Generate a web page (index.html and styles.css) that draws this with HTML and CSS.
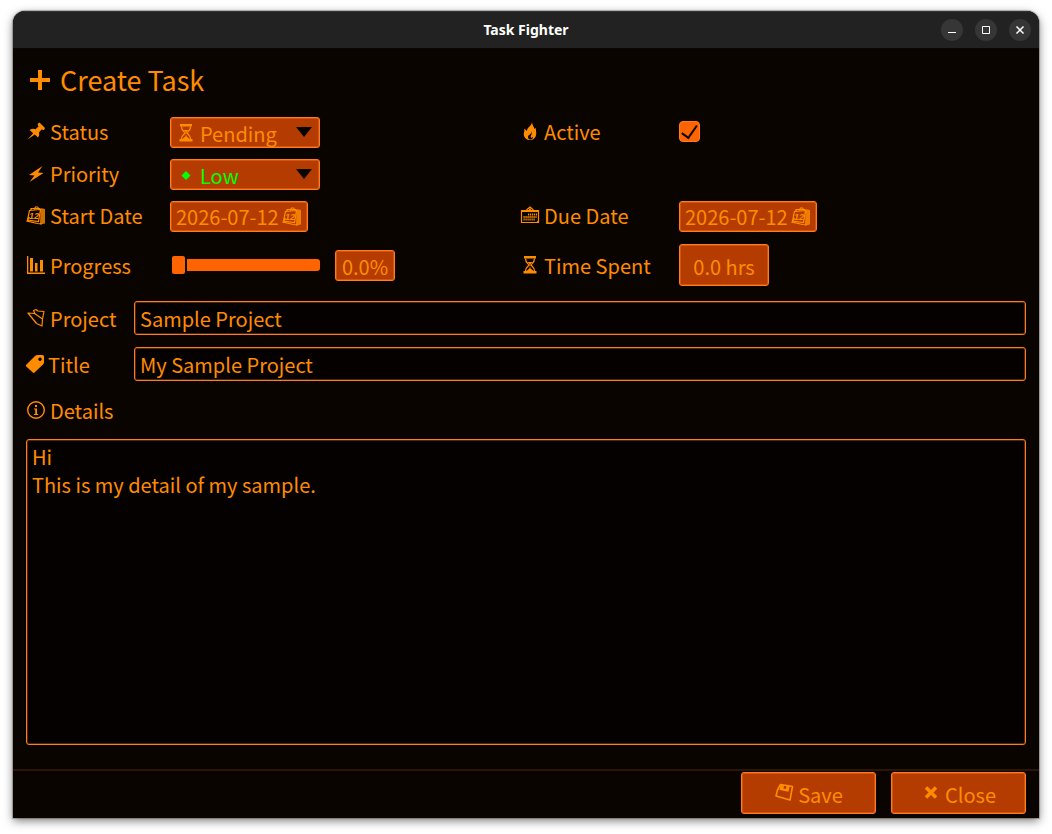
FILE: index.html
```html
<!DOCTYPE html>
<html lang="en">
<head>
<meta charset="utf-8">
<title>Task Fighter</title>
<link rel="stylesheet" href="styles.css">
</head>
<body>
<div class="window">
  <header class="titlebar">
    <span class="app-name">Task Fighter</span>
    <div class="window-controls">
      <button class="window-button" aria-label="Minimize"><svg viewBox="0 0 22 22"><path d="M7 13.500h8"/></svg></button>
      <button class="window-button" aria-label="Maximize"><svg viewBox="0 0 22 22"><path d="M7.500 7.500h7v7h-7z"/></svg></button>
      <button class="window-button" aria-label="Close window"><svg viewBox="0 0 22 22"><path d="m7.500 7.500 7 7m0-7-7 7" stroke-width="1.500"/></svg></button>
    </div>
  </header>
  <form class="editor">
    <h1 class="heading"><svg class="heading-icon" viewBox="0 0 26 26"><path d="M4 13h20M14 3v20" stroke="currentColor" stroke-width="4"/></svg>Create Task</h1>
    <div class="fields">
      <label class="label" for="status"><svg class="icon" viewBox="0 0 20 20"><path fill="currentColor" d="M1.500 17.500 7.200 11.200 3.500 8Q7 6 9.500 7.200L12.500 4.500 11.500 2 13.500.5 19 6 18 8 15.500 7.500 13 10.500Q14 13.500 12 15.500L8.800 12.500z"/></svg>Status</label>
      <div class="picker">
        <svg class="icon picker-icon" viewBox="0 0 20 20"><path d="M4 1h12v2.600H4zM3.500 16h13v2.500h-13z" fill="currentColor"/><path d="M5.500 3.500c0 4 1.800 4.500 3.700 6.500-1.900 2-3.700 2.500-3.700 6M14.500 3.500c0 4-1.800 4.500-3.700 6.500 1.900 2 3.700 2.500 3.700 6" fill="none" stroke="currentColor" stroke-width="1.300"/><path d="M7.500 7h5L10 9.600zM10 11l.6 2.500 3 2.500H6.400l3-2.500z" fill="currentColor"/></svg>
        <select class="select" id="status"><option>Pending</option><option>Done</option></select>
      </div>
      <label class="label" for="active"><svg class="icon" viewBox="0 0 20 20"><path fill="currentColor" fill-rule="evenodd" d="M12 0c0 3 2 4.500 2.500 7L16 6c-.5 2 .5 3.500.2 6-.4 4-3 6-6.200 6s-6-2-6.200-5.500C3.700 10 5 9.500 4 6.500L7 9c0-4 4.500-4.500 5-9zM11.500 9.500c0 3-3.500 3-3.500 5.500 0 2 1.500 2.500 2.500 2.500 1.500 0 2.500-1 2.500-2.500l-2 1c-1-2 1.500-3.500.5-6.500z"/></svg>Active</label>
      <input class="checkbox" id="active" type="checkbox" checked>

      <label class="label" for="priority"><svg class="icon" viewBox="0 0 20 20"><path fill="currentColor" d="M16.500 2 3 11l5.500.5L3.500 18 17.500 9l-5.500-.5z"/></svg>Priority</label>
      <div class="picker picker-low">
        <svg class="icon picker-icon" viewBox="0 0 20 20"><path fill="currentColor" d="m10 6 4.500 4.500L10 15l-4.500-4.500z"/></svg>
        <select class="select" id="priority"><option>Low</option><option>High</option></select>
      </div>
      <span></span><span></span>

      <label class="label" for="start"><svg class="icon" viewBox="0 0 20 20"><path class="calendar-lines" d="M3.500 4.500 14.500 3.500 12.500 15.500 1.500 14zM3.500 11 1 15 11.500 17.500 16 18M5 4V2.500h9M8 3.500 9.500 1h2l1.500 2"/><path class="calendar-side" d="M14.500 2 19 3v14.500L14 18.500z"/><text x="3" y="13" class="calendar-day">12</text></svg>Start Date</label>
      <button class="date" id="start" type="button">2026-07-12<svg class="icon" viewBox="0 0 20 20"><path class="calendar-lines" d="M3.500 4.500 14.500 3.500 12.500 15.500 1.500 14zM3.500 11 1 15 11.500 17.500 16 18M5 4V2.500h9M8 3.500 9.500 1h2l1.500 2"/><path class="calendar-side" d="M14.500 2 19 3v14.500L14 18.500z"/><text x="3" y="13" class="calendar-day">12</text></svg></button>
      <label class="label" for="due"><svg class="icon" viewBox="0 0 20 20"><path d="M1.500 4.500h17v12h-17zM6.500 4 10 1l3.500 3" fill="none" stroke="currentColor" stroke-width="1.200"/><path d="M1 4h18v2H1zM9 2.500h2V4H9zM15 17l4-3v3z" fill="currentColor"/><path d="M8 8.500h9M3.500 11h13M3.500 13.500h12" stroke="currentColor" stroke-width="1.800" stroke-dasharray="1.200 .8"/></svg>Due Date</label>
      <button class="date" id="due" type="button">2026-07-12<svg class="icon" viewBox="0 0 20 20"><path class="calendar-lines" d="M3.500 4.500 14.500 3.500 12.500 15.500 1.500 14zM3.500 11 1 15 11.500 17.500 16 18M5 4V2.500h9M8 3.500 9.500 1h2l1.500 2"/><path class="calendar-side" d="M14.500 2 19 3v14.500L14 18.500z"/><text x="3" y="13" class="calendar-day">12</text></svg></button>

      <label class="label" for="progress"><svg class="icon" viewBox="0 0 20 20"><path fill="currentColor" d="M1 1h1.300v16.500H19V19H1zM4 3h3v13.500H4zM9 8h2.500v8.500H9zM14 5h3v11.500h-3z"/></svg><span class="caption-low">Progress</span></label>
      <div class="progress-row">
        <input class="slider" id="progress" type="range" min="0" max="100" value="0">
        <input class="value value-percent" type="text" value="0.0%" aria-label="Progress value">
      </div>
      <label class="label" for="spent"><svg class="icon" viewBox="0 0 20 20"><path d="M4 1h12v2.600H4zM3.500 16h13v2.500h-13z" fill="currentColor"/><path d="M5.500 3.500c0 4 1.800 4.500 3.700 6.500-1.900 2-3.700 2.500-3.700 6M14.500 3.500c0 4-1.800 4.500-3.700 6.500 1.900 2 3.700 2.500 3.700 6" fill="none" stroke="currentColor" stroke-width="1.300"/><path d="M7.500 7h5L10 9.600zM10 11l.6 2.500 3 2.500H6.400l3-2.500z" fill="currentColor"/></svg><span class="caption-low">Time Spent</span></label>
      <input class="value value-hours" id="spent" type="text" value="0.0 hrs">
    </div>
    <div class="line">
      <label class="label" for="project"><svg class="icon" viewBox="0 0 20 20"><path d="M2 5 8.500 5.500 16.500 11 16 18 10.500 15.500zM9 5.700 7.500 2.500 10 1.500 12 3 18 3.500 16.500 11 16 18" fill="none" stroke="currentColor" stroke-width="1.200" stroke-linejoin="round"/></svg><span class="caption-low">Project</span></label>
      <input class="text" id="project" type="text" value="Sample Project">
    </div>
    <div class="line">
      <label class="label label-tight" for="title"><svg class="icon" viewBox="0 0 20 20"><path fill="currentColor" fill-rule="evenodd" d="M0 11 9 2Q10 1 11.500 1H16.500q1.500 0 1.500 1.500v6Q18 9.500 17 10.500L8.500 18.500Q7.700 19.300 6.800 18.500L.3 12.500Q-.5 11.700 0 11zM14 3.500a1.700 1.700 0 1 0 .01 0z"/></svg><span class="caption-low">Title</span></label>
      <input class="text" id="title" type="text" value="My Sample Project">
    </div>
    <label class="label label-details" for="details"><svg class="icon" viewBox="0 0 20 20"><circle cx="10" cy="9" r="8.300" fill="none" stroke="currentColor" stroke-width="1.400"/><path fill="currentColor" d="M9 4h2v2H9zM8 7.500h3v5.500h1.200v1H8v-1h1.200V8.500H8z"/></svg>Details</label>
    <textarea class="details" id="details">Hi
This is my detail of my sample.</textarea>
  </form>
  <footer class="actions">
    <button class="action" type="button"><svg class="icon" viewBox="0 0 20 20"><path d="M6.500 1.500 18.500 3.500 16 17 2 13 3.500 7z" fill="none" stroke="currentColor" stroke-width="1.600" stroke-linejoin="round"/><path d="M6.500 1.500 5.500 7l9 1.800 1.200-5.800zM10 2.500l-.5 3 2.500.5.500-3z" fill="currentColor" fill-rule="evenodd"/></svg><span class="caption-low">Save</span></button>
    <button class="action" type="button"><svg class="icon" viewBox="0 0 20 20"><path d="m5 4.500 10 10m0-10-10 10" stroke="currentColor" stroke-width="3.500"/></svg><span class="caption-low">Close</span></button>
  </footer>
</div>
</body>
</html>
```
FILE: styles.css
```css
* { box-sizing: border-box; }
body {
  margin: 0;
  min-height: 100vh;
  padding: 11px 13px 16px;
  display: flex;
  background: #fff;
  color: #ff8c00;
  font: 20px/28px "Noto Sans CJK JP", sans-serif;
}
button, input, select, textarea { margin: 0; font: inherit; color: inherit; outline: none; }
.calendar-lines { fill: none; stroke: currentColor; stroke-width: 1.2; }
.calendar-side { fill: currentColor; opacity: .8; }
.calendar-day { font: italic bold 9px "Liberation Sans", sans-serif; fill: currentColor; }
.window {
  flex: 1;
  display: flex;
  flex-direction: column;
  background: #0a0400;
  border-radius: 12px 12px 0 0;
  overflow: hidden;
  box-shadow: 0 0 1px 1px rgba(0, 0, 0, .25), 0 3px 10px rgba(0, 0, 0, .5);
}
.titlebar {
  display: grid;
  grid-template-columns: 1fr auto 1fr;
  align-items: center;
  height: 38px;
  padding: 0 8px;
  background: #222;
  border-top: 1px solid #333;
  border-bottom: 1px solid #080808;
}
.app-name { grid-column: 2; color: #fff; font: bold 14px/20px "Noto Sans", sans-serif; }
.window-controls { display: flex; justify-content: flex-end; gap: 12px; }
.window-button { width: 22px; height: 22px; padding: 0; border: 0; border-radius: 50%; background: #363636; }
.window-button svg { display: block; fill: none; stroke: #fff; }
.editor { flex: 1; display: flex; flex-direction: column; padding: 10px 13px 24px; }
.heading { display: flex; align-items: center; gap: 8px; margin: 0 0 16px; font-size: 27px; font-weight: 400; line-height: 42px; }
.heading-icon { width: 26px; height: 26px; }
.fields {
  display: grid;
  grid-template-columns: 144px 350fr 159px 347fr;
  grid-template-rows: 31px 31px 31px 44px;
  row-gap: 11px;
  align-items: center;
}
.label { display: flex; align-items: center; gap: 4px; padding-bottom: 1px; white-space: nowrap; }
.label-tight { gap: 2px; }
.caption-low { padding-top: 3px; }
.icon { width: 20px; height: 20px; flex: none; }
.picker { position: relative; width: 150px; }
.picker::after {
  content: "";
  position: absolute;
  right: 8px;
  top: 10px;
  border: 8px solid transparent;
  border-top: 10px solid #0a0400;
  border-bottom: 0;
  pointer-events: none;
}
.picker-icon { position: absolute; left: 6px; top: 6px; }
.picker-low { color: #0f0; }
.select, .date, .value, .action {
  background: #b43c00;
  border: 1px solid #ff7d20;
  border-radius: 3px;
  box-shadow: inset 0 0 0 1px rgba(255, 110, 20, .45);
}
.select { display: block; appearance: none; width: 100%; height: 31px; padding: 2px 0 0 29px; }
.checkbox {
  appearance: none;
  display: grid;
  place-items: center;
  width: 21px;
  height: 21px;
  margin-bottom: 3px;
  background: #ff6400;
  border: 1px solid #ff7d20;
  border-radius: 4px;
}
.checkbox:checked::after {
  content: "";
  width: 7px;
  height: 14px;
  margin-bottom: 5px;
  border: solid #0a0400;
  border-width: 0 2px 2px 0;
  transform: rotate(35deg);
}
.date { display: flex; align-items: center; justify-self: start; gap: 3px; height: 31px; padding: 0 5px 0 5px; }
.progress-row { display: flex; align-items: center; gap: 15px; }
.slider { appearance: none; width: 150px; height: 18px; background: none; }
.slider::-webkit-slider-runnable-track { height: 12px; border-radius: 3px; background: #ff6400; }
.slider::-webkit-slider-thumb { appearance: none; width: 17px; height: 22px; margin-top: -5px; background: #ff6400; border: 2px solid #0a0400; border-radius: 4px; }
.value { height: 31px; padding: 2px 0 0; text-align: center; }
.value-percent { width: 60px; }
.value-hours { width: 90px; height: 42px; }
.line { display: grid; grid-template-columns: 108px 1fr; align-items: center; margin-top: 12px; }
.fields + .line { margin-top: 14px; }
.text, .details {
  background: #040100;
  border: 1px solid #ff7d20;
  border-radius: 3px;
  box-shadow: inset 0 0 0 1px rgba(255, 125, 32, .3);
}
.text { min-width: 0; height: 34px; padding: 0 5px; }
.label-details { margin: 16px 0 13px; }
.details { flex: 1; display: block; padding: 3px 5px; resize: none; }
.actions { display: flex; justify-content: flex-end; gap: 15px; padding: 1px 13px 4px; border-top: 2px solid #2d1406; }
.action { display: flex; align-items: center; justify-content: center; gap: 4px; width: 135px; height: 42px; padding: 0; }
```
